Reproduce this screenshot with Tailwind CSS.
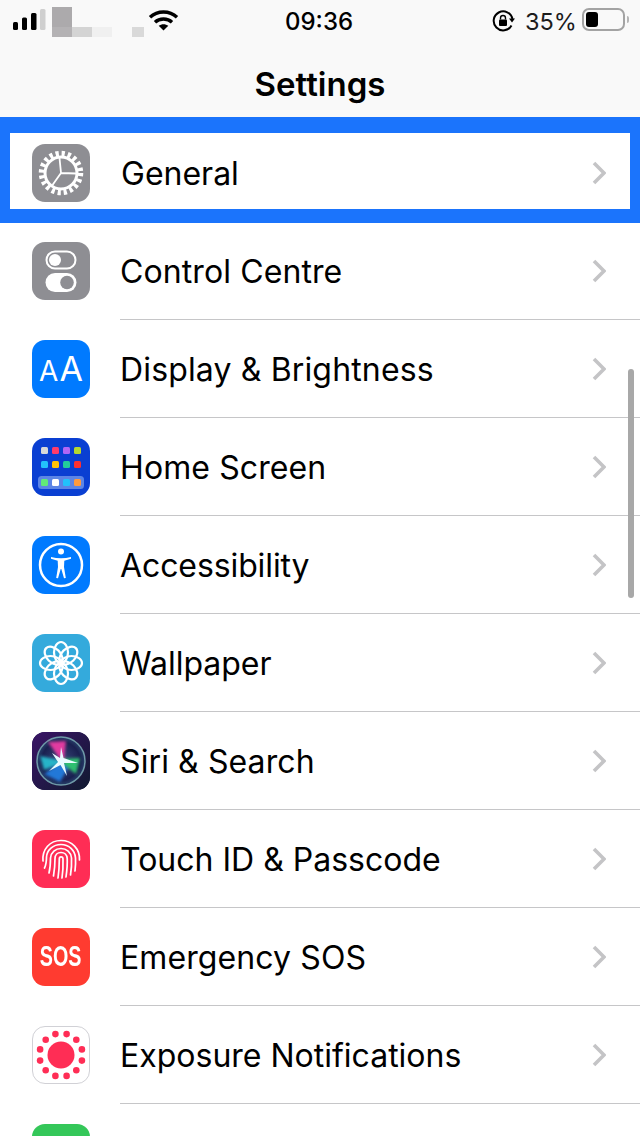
<!DOCTYPE html>
<html lang="en">
<head>
  <meta charset="UTF-8" />
  <title>Settings</title>
  <meta name="viewport" content="width=device-width, initial-scale=1.0" />
  <script src="https://cdn.jsdelivr.net/npm/@tailwindcss/browser@4"></script>
</head>
<body class="bg-white text-black font-['Inter',sans-serif]">
<div class="relative w-[640px] h-[1136px] overflow-hidden bg-white">

  <!-- Header -->
  <header class="h-[117px] bg-[#f9f9f9]">
    <div class="h-[42px] flex items-center relative">
      <svg class="ml-[13px] w-[34px] h-[24px]" viewBox="0 0 34 24">
        <rect x="0" y="13" width="5" height="8" rx="1.5" fill="#000"/>
        <rect x="9" y="8.5" width="5" height="12.500" rx="1.500" fill="#000"/>
        <rect x="18" y="4" width="5.500" height="17" rx="1.500" fill="#000"/>
        <rect x="27" y="0" width="5.500" height="21" rx="1.500" fill="#cfcfcf"/>
      </svg>
      <!-- blurred carrier name -->
      <div class="ml-[5px] mt-[2px] flex flex-col">
        <div class="w-[20px] h-[20px] bg-[#acaaac]"></div>
        <div class="flex h-[10px]">
          <div class="w-[20px] bg-[#b4b2b4]"></div>
          <div class="w-[20px] bg-[#d4d4d4]"></div>
          <div class="w-[20px] bg-[#f0f0f0]"></div>
          <div class="w-[20px]"></div>
          <div class="w-[12px] bg-[#d9d9d9]"></div>
        </div>
      </div>
      <svg class="absolute left-[148px] top-[9px] w-[31px] h-[22px]" viewBox="0 0 31 22" fill="none" stroke="#000" stroke-width="3.400">
        <path d="M2 8.200 C9.500 1.200 21.500 1.200 29 8.200"/>
        <path d="M7 13.200 C11.500 9 19.500 9 24 13.200"/>
        <path d="M15.500 21.500 L10.700 16.800 C13.500 14.600 17.500 14.600 20.300 16.800 Z" fill="#000" stroke="none"/>
      </svg>
      <span class="absolute left-[285px] top-[8px] text-[24px] leading-[28px] font-medium">09:36</span>
      <svg class="absolute left-[492px] top-[10px] w-[23px] h-[22px]" viewBox="0 0 23 22" fill="none">
        <path d="M20.500 9 A9.500 9.500 0 1 0 19.500 15.500" stroke="#000" stroke-width="2"/>
        <path d="M17 8.500 L23 8.500 L20 12.500 Z" fill="#000"/>
        <rect x="7" y="9.500" width="8" height="6.500" rx="1" fill="#000"/>
        <path d="M8.500 9.500 V8 A2.500 2.500 0 0 1 13.500 8 V9.500" stroke="#000" stroke-width="1.400"/>
      </svg>
      <span class="absolute left-[525px] top-[8px] text-[23.500px] leading-[28px] text-[#1c1c1c]">35%</span>
      <div class="absolute left-[582px] top-[8px] w-[43px] h-[23px] rounded-[7px] border-2 border-[#a3a3a3] p-[2px]">
        <div class="w-[12px] h-[15px] bg-black rounded-[3px]"></div>
      </div>
      <div class="absolute left-[627px] top-[16px] w-[2px] h-[7px] bg-[#b5b5b5] rounded-r-sm"></div>
    </div>
    <h1 class="text-center text-[33px] leading-[40px] font-semibold mt-[22px]">Settings</h1>
  </header>

  <!-- General, with the blue highlight -->
  <div class="border-[#1b74fc] border-x-[10px] border-t-[16px] border-b-[14px]">
    <div class="h-[76px] pl-[22px] pr-[24px] pt-[4px] flex items-center bg-white">
      <div class="w-[58px] h-[58px] rounded-[13px] bg-[#8e8e93] shrink-0">
        <svg viewBox="0 0 58 58" fill="none" stroke="#fff">
          <circle cx="29" cy="29" r="19.500" stroke-width="5.500" stroke-dasharray="3.200 2.930"/>
          <circle cx="29" cy="29" r="16" stroke-width="3"/>
          <path d="M29 29 L27.500 14 M29 29 L44 29.500 M29 29 L20.500 41" stroke-width="1.800"/>
        </svg>
      </div>
      <span class="ml-[31px] mt-[2px] flex-1 text-[32px]">General</span>
      <svg class="w-[14px] h-[24px]" viewBox="0 0 14 24" fill="none" stroke="#c4c4c6" stroke-width="3.600"><path d="M2 2 L12 12 L2 22"/></svg>
    </div>
  </div>

  <!-- Rows -->
  <div class="-mt-px">
    <div class="h-[98px] flex items-center">
      <div class="ml-[32px] w-[58px] h-[58px] rounded-[13px] bg-[#8e8e93] shrink-0">
        <svg viewBox="0 0 58 58">
          <rect x="14.500" y="9.500" width="29" height="17" rx="8.500" fill="none" stroke="#fff" stroke-width="2"/>
          <circle cx="23" cy="18" r="6" fill="#fff"/>
          <rect x="13.500" y="31" width="31" height="19" rx="9.500" fill="#fff"/>
          <circle cx="35" cy="40.500" r="6.800" fill="#8e8e93"/>
        </svg>
      </div>
      <div class="ml-[30px] h-full flex-1 flex items-center pr-[34px] border-b border-[#c6c6c8]">
        <span class="flex-1 mt-[2px] text-[32px] tracking-[0.1px]">Control Centre</span>
        <svg class="w-[14px] h-[24px]" viewBox="0 0 14 24" fill="none" stroke="#c4c4c6" stroke-width="3.600"><path d="M2 2 L12 12 L2 22"/></svg>
      </div>
    </div>

    <div class="h-[98px] flex items-center">
      <div class="ml-[32px] w-[58px] h-[58px] rounded-[13px] bg-[#007aff] shrink-0 flex items-baseline justify-center text-white leading-[58px]">
        <span class="text-[28px] mr-[1px]">A</span><span class="text-[34px]">A</span>
      </div>
      <div class="ml-[30px] h-full flex-1 flex items-center pr-[34px] border-b border-[#c6c6c8]">
        <span class="flex-1 mt-[2px] text-[32px] tracking-[0.15px]">Display &amp; Brightness</span>
        <svg class="w-[14px] h-[24px]" viewBox="0 0 14 24" fill="none" stroke="#c4c4c6" stroke-width="3.600"><path d="M2 2 L12 12 L2 22"/></svg>
      </div>
    </div>

    <div class="h-[98px] flex items-center">
      <div class="ml-[32px] w-[58px] h-[58px] rounded-[13px] bg-[#0a3fd2] shrink-0">
        <svg viewBox="0 0 58 58">
          <rect x="9" y="9" width="7" height="7" rx="1.500" fill="#d8d8d8"/>
          <rect x="20" y="9" width="7" height="7" rx="1.500" fill="#ff3b6b"/>
          <rect x="31" y="9" width="7" height="7" rx="1.500" fill="#b266f5"/>
          <rect x="42" y="9" width="7" height="7" rx="1.500" fill="#b5d92f"/>
          <rect x="9" y="23" width="7" height="7" rx="1.500" fill="#22c1fb"/>
          <rect x="20" y="23" width="7" height="7" rx="1.500" fill="#ffc107"/>
          <rect x="31" y="23" width="7" height="7" rx="1.500" fill="#22cf9b"/>
          <rect x="42" y="23" width="7" height="7" rx="1.500" fill="#ff3030"/>
          <rect x="6" y="38" width="46" height="13" rx="3.500" fill="#5c85e6"/>
          <rect x="9" y="41" width="7" height="7" rx="1.500" fill="#62ea78"/>
          <rect x="20" y="41" width="7" height="7" rx="1.500" fill="#fff"/>
          <rect x="31" y="41" width="7" height="7" rx="1.500" fill="#22c1fb"/>
          <rect x="42" y="41" width="7" height="7" rx="1.500" fill="#ff9a3d"/>
        </svg>
      </div>
      <div class="ml-[30px] h-full flex-1 flex items-center pr-[34px] border-b border-[#c6c6c8]">
        <span class="flex-1 mt-[2px] text-[32px] tracking-[0.1px]">Home Screen</span>
        <svg class="w-[14px] h-[24px]" viewBox="0 0 14 24" fill="none" stroke="#c4c4c6" stroke-width="3.600"><path d="M2 2 L12 12 L2 22"/></svg>
      </div>
    </div>

    <div class="h-[98px] flex items-center">
      <div class="ml-[32px] w-[58px] h-[58px] rounded-[13px] bg-[#007aff] shrink-0">
        <svg viewBox="0 0 58 58">
          <circle cx="29" cy="29" r="21" fill="none" stroke="#fff" stroke-width="2.500"/>
          <circle cx="29" cy="15.500" r="3" fill="#fff"/>
          <path d="M19 21 Q29 23.500 39 21 L39 22.800 L32.300 24.800 L32 31 L33.800 42 L32 42.300 L29.300 33 L28.700 33 L26 42.300 L24.200 42 L26 31 L25.700 24.800 L19 22.800 Z" fill="#fff"/>
        </svg>
      </div>
      <div class="ml-[30px] h-full flex-1 flex items-center pr-[34px] border-b border-[#c6c6c8]">
        <span class="flex-1 mt-[2px] text-[32px] tracking-[-0.1px]">Accessibility</span>
        <svg class="w-[14px] h-[24px]" viewBox="0 0 14 24" fill="none" stroke="#c4c4c6" stroke-width="3.600"><path d="M2 2 L12 12 L2 22"/></svg>
      </div>
    </div>

    <div class="h-[98px] flex items-center">
      <div class="ml-[32px] w-[58px] h-[58px] rounded-[13px] bg-[#34aadc] shrink-0">
        <svg viewBox="0 0 58 58" fill="none" stroke="#fff" stroke-width="2.200">
          <ellipse cx="29" cy="18.500" rx="7" ry="10.500"/>
          <ellipse cx="29" cy="18.500" rx="7" ry="10.500" transform="rotate(45 29 29)"/>
          <ellipse cx="29" cy="18.500" rx="7" ry="10.500" transform="rotate(90 29 29)"/>
          <ellipse cx="29" cy="18.500" rx="7" ry="10.500" transform="rotate(135 29 29)"/>
          <ellipse cx="29" cy="18.500" rx="7" ry="10.500" transform="rotate(180 29 29)"/>
          <ellipse cx="29" cy="18.500" rx="7" ry="10.500" transform="rotate(225 29 29)"/>
          <ellipse cx="29" cy="18.500" rx="7" ry="10.500" transform="rotate(270 29 29)"/>
          <ellipse cx="29" cy="18.500" rx="7" ry="10.500" transform="rotate(315 29 29)"/>
          <circle cx="29" cy="29" r="3.200" fill="#fff" stroke="none"/>
        </svg>
      </div>
      <div class="ml-[30px] h-full flex-1 flex items-center pr-[34px] border-b border-[#c6c6c8]">
        <span class="flex-1 mt-[2px] text-[32px]">Wallpaper</span>
        <svg class="w-[14px] h-[24px]" viewBox="0 0 14 24" fill="none" stroke="#c4c4c6" stroke-width="3.600"><path d="M2 2 L12 12 L2 22"/></svg>
      </div>
    </div>

    <div class="h-[98px] flex items-center">
      <div class="ml-[32px] w-[58px] h-[58px] rounded-[13px] overflow-hidden bg-[#1b1c48] shrink-0">
        <svg viewBox="0 0 58 58">
          <defs>
            <linearGradient id="siriBg" x1="0" y1="0" x2="1" y2="1">
              <stop offset="0" stop-color="#3a1466"/><stop offset="1" stop-color="#101a30"/>
            </linearGradient>
            <radialGradient id="siriOrb" cx="0.5" cy="0.5" r="0.5">
              <stop offset="0" stop-color="#3a4a7c"/><stop offset="0.8" stop-color="#1a2050"/><stop offset="1" stop-color="#27406a"/>
            </radialGradient>
            <filter id="siriBlur" x="-20%" y="-20%" width="140%" height="140%"><feGaussianBlur stdDeviation="1.600"/></filter>
            <filter id="siriSoft" x="-20%" y="-20%" width="140%" height="140%"><feGaussianBlur stdDeviation="0.600"/></filter>
          </defs>
          <rect width="58" height="58" fill="url(#siriBg)"/>
          <circle cx="29" cy="29" r="24" fill="url(#siriOrb)" stroke="#6f9aa8" stroke-width="1.500"/>
          <g filter="url(#siriBlur)">
            <path d="M28 27 L16 10 L34 9 L32 27 Z" fill="#e23aa0"/>
            <path d="M31 27 L48 26 L44 42 L31 32 Z" fill="#2fc070"/>
            <path d="M28 31 L12 42 L28 50 L36 36 Z" fill="#2478d8"/>
            <path d="M27 28 L8 24 L12 38 L27 32 Z" fill="#28b4c8"/>
          </g>
          <path d="M29 15 L31.500 26 L46 31 L32 31 L35 44 L28.500 33 L17 39 L26 30 L20 21 L28 26 Z" fill="#e8fbff" filter="url(#siriSoft)"/>
        </svg>
      </div>
      <div class="ml-[30px] h-full flex-1 flex items-center pr-[34px] border-b border-[#c6c6c8]">
        <span class="flex-1 mt-[2px] text-[32px] tracking-[0.1px]">Siri &amp; Search</span>
        <svg class="w-[14px] h-[24px]" viewBox="0 0 14 24" fill="none" stroke="#c4c4c6" stroke-width="3.600"><path d="M2 2 L12 12 L2 22"/></svg>
      </div>
    </div>

    <div class="h-[98px] flex items-center">
      <div class="ml-[32px] w-[58px] h-[58px] rounded-[13px] bg-[#ff2d55] shrink-0">
        <svg viewBox="0 0 58 58" fill="none" stroke="#fff" stroke-width="1.700" stroke-linecap="round">
          <path d="M11 31 C10 19 18 10.500 29 10.500 C40 10.500 48 19 47.500 30"/>
          <path d="M12.500 38 C14.500 34 14.500 30 14.500 27 C15 20 21 14.500 29 14.500 C37 14.500 43 20.500 43.500 28 C43.800 33 43.500 37 43 41"/>
          <path d="M17 43 C18.500 37 18.500 32 18.500 28 C19 22.500 23.500 18.500 29 18.500 C34.500 18.500 39 22.500 39.500 28 C39.800 34 39.500 39 38.500 45"/>
          <path d="M21.500 46 C22.500 40 23 34 23 28.500 C23 25 25.500 22.500 29 22.500 C32.500 22.500 35 25 35.200 28.500 C35.500 34 35 40 34 47"/>
          <path d="M26 48 C27 41 27.300 34 27.300 29 C27.300 27.800 28 26.800 29 26.800 C30 26.800 31 27.800 31 29 C31.200 35 31 41 30 48"/>
        </svg>
      </div>
      <div class="ml-[30px] h-full flex-1 flex items-center pr-[34px] border-b border-[#c6c6c8]">
        <span class="flex-1 mt-[2px] text-[32px]">Touch ID &amp; Passcode</span>
        <svg class="w-[14px] h-[24px]" viewBox="0 0 14 24" fill="none" stroke="#c4c4c6" stroke-width="3.600"><path d="M2 2 L12 12 L2 22"/></svg>
      </div>
    </div>

    <div class="h-[98px] flex items-center">
      <div class="ml-[32px] w-[58px] h-[58px] rounded-[13px] bg-[#ff3b30] shrink-0 flex items-center justify-center text-white text-[29px] font-bold font-['Liberation_Sans',sans-serif]">
        <span class="scale-x-[0.68]">SOS</span>
      </div>
      <div class="ml-[30px] h-full flex-1 flex items-center pr-[34px] border-b border-[#c6c6c8]">
        <span class="flex-1 mt-[2px] text-[32px] tracking-[0.1px]">Emergency SOS</span>
        <svg class="w-[14px] h-[24px]" viewBox="0 0 14 24" fill="none" stroke="#c4c4c6" stroke-width="3.600"><path d="M2 2 L12 12 L2 22"/></svg>
      </div>
    </div>

    <div class="h-[98px] flex items-center">
      <div class="ml-[32px] w-[58px] h-[58px] rounded-[13px] bg-white border border-[#d1d1d6] shrink-0">
        <svg viewBox="1 1 56 56" fill="#ff2d55">
          <circle cx="29" cy="29" r="13.500"/>
          <circle cx="23.400" cy="8.100" r="3.300"/>
          <circle cx="34.600" cy="8.100" r="3.300"/>
          <circle cx="44.300" cy="13.700" r="3.300"/>
          <circle cx="49.900" cy="23.400" r="3.300"/>
          <circle cx="49.900" cy="34.600" r="3.300"/>
          <circle cx="44.300" cy="44.300" r="3.300"/>
          <circle cx="34.600" cy="49.900" r="3.300"/>
          <circle cx="23.400" cy="49.900" r="3.300"/>
          <circle cx="13.700" cy="44.300" r="3.300"/>
          <circle cx="8.100" cy="34.600" r="3.300"/>
          <circle cx="8.100" cy="23.400" r="3.300"/>
          <circle cx="13.700" cy="13.700" r="3.300"/>
        </svg>
      </div>
      <div class="ml-[30px] h-full flex-1 flex items-center pr-[34px] border-b border-[#c6c6c8]">
        <span class="flex-1 mt-[2px] text-[32px]">Exposure Notifications</span>
        <svg class="w-[14px] h-[24px]" viewBox="0 0 14 24" fill="none" stroke="#c4c4c6" stroke-width="3.600"><path d="M2 2 L12 12 L2 22"/></svg>
      </div>
    </div>

    <div class="h-[98px] flex items-center">
      <div class="ml-[32px] w-[58px] h-[58px] rounded-[13px] bg-[#34c759] shrink-0"></div>
    </div>
  </div>

  <!-- Scroll indicator -->
  <div class="absolute left-[628px] top-[369px] w-[6px] h-[229px] rounded-full bg-[#a8a8a8]"></div>
</div>
</body>
</html>
